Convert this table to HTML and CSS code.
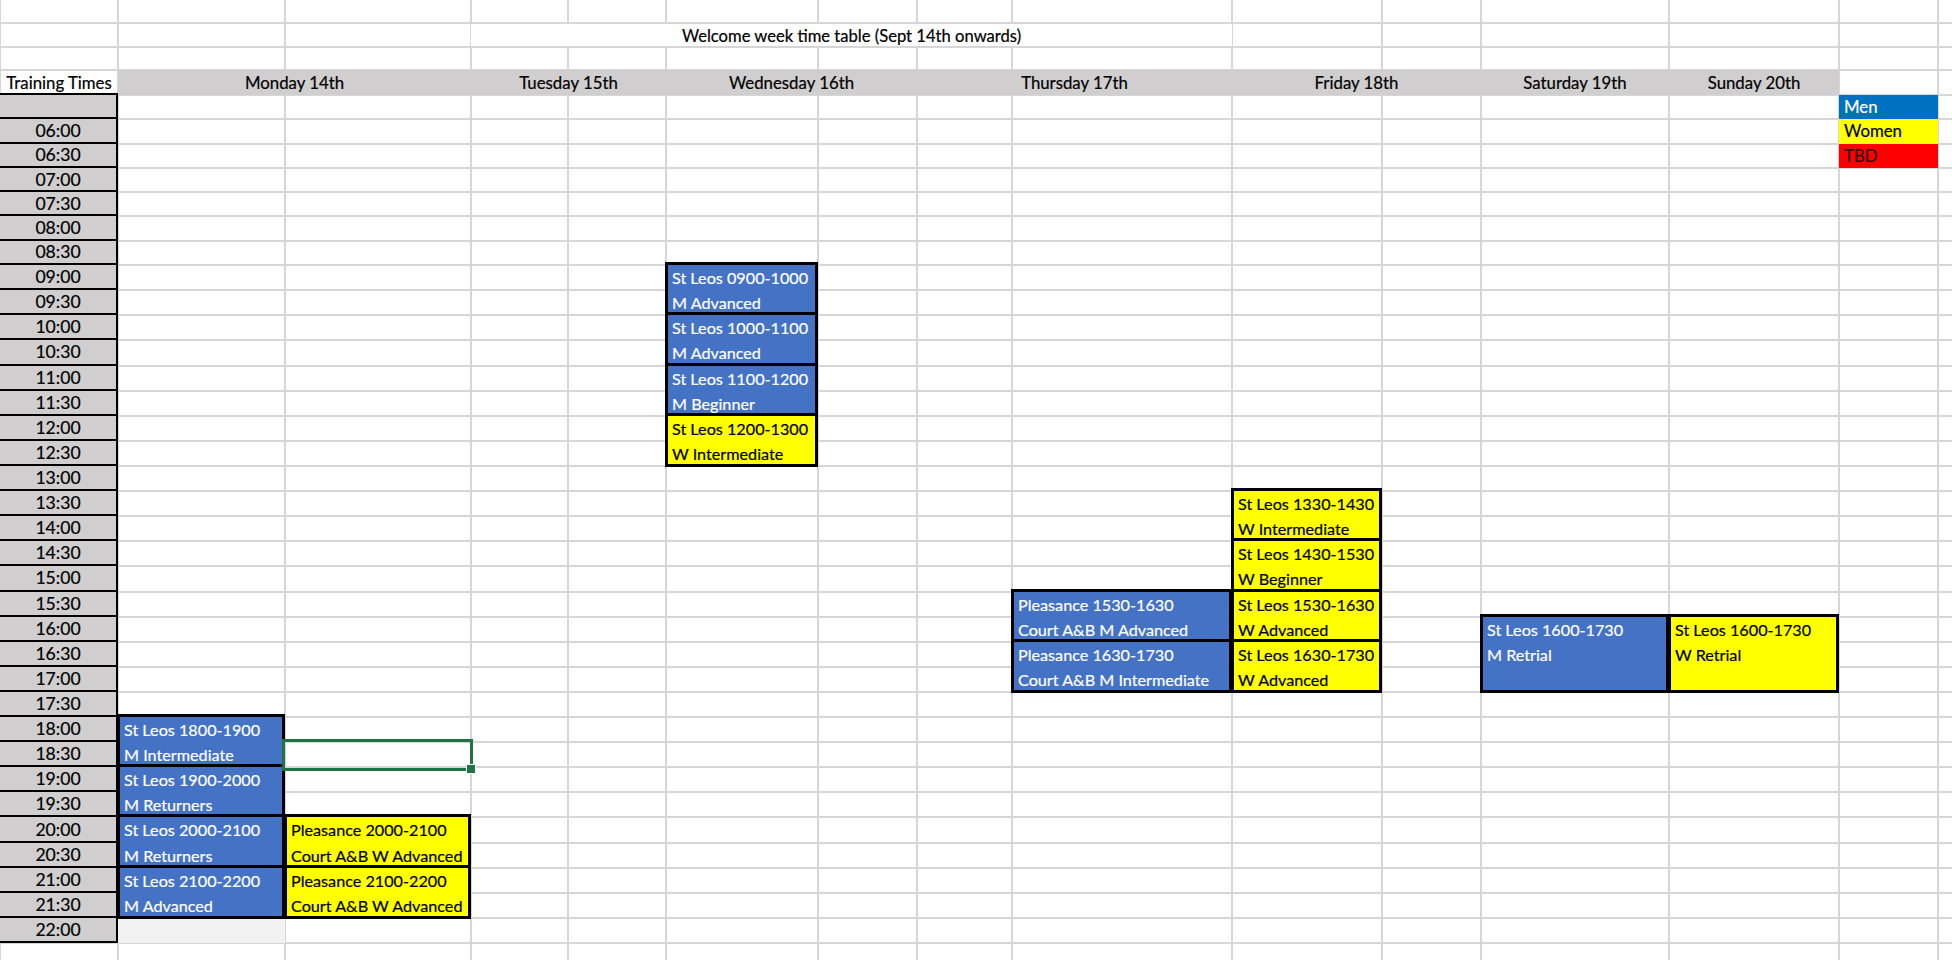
FILE: index.html
```html
<!DOCTYPE html>
<html lang="en">
<head>
<meta charset="utf-8">
<title>Welcome week time table</title>
<link rel="stylesheet" href="styles.css">
</head>
<body>
<div class="sheet">
  <div class="vgrid">
    <div></div><div></div><div></div><div></div><div></div>
    <div></div><div></div><div></div><div></div><div></div>
    <div></div><div></div><div></div><div></div><div></div>
  </div>
  <div class="hgrid">
    <div></div><div></div><div></div><div></div><div></div>
    <div></div><div></div><div></div><div></div><div></div>
    <div></div><div></div><div></div><div></div><div></div>
    <div></div><div></div><div></div><div></div><div></div>
    <div></div><div></div><div></div><div></div><div></div>
    <div></div><div></div><div></div><div></div><div></div>
    <div></div><div></div><div></div><div></div><div></div>
    <div></div><div></div><div></div><div></div>
  </div>

  <div class="title">Welcome week time table (Sept 14th onwards)</div>

  <div class="corner">Training Times</div>
  <div class="day mon">Monday 14th</div>
  <div class="day tue">Tuesday 15th</div>
  <div class="day wed">Wednesday 16th</div>
  <div class="day thu">Thursday 17th</div>
  <div class="day fri">Friday 18th</div>
  <div class="day sat">Saturday 19th</div>
  <div class="day sun">Sunday 20th</div>

  <div class="times">
    <div class="t"></div>
    <div class="t">06:00</div><div class="t">06:30</div>
    <div class="t">07:00</div><div class="t">07:30</div>
    <div class="t">08:00</div><div class="t">08:30</div>
    <div class="t">09:00</div><div class="t">09:30</div>
    <div class="t">10:00</div><div class="t">10:30</div>
    <div class="t">11:00</div><div class="t">11:30</div>
    <div class="t">12:00</div><div class="t">12:30</div>
    <div class="t">13:00</div><div class="t">13:30</div>
    <div class="t">14:00</div><div class="t">14:30</div>
    <div class="t">15:00</div><div class="t">15:30</div>
    <div class="t">16:00</div><div class="t">16:30</div>
    <div class="t">17:00</div><div class="t">17:30</div>
    <div class="t">18:00</div><div class="t">18:30</div>
    <div class="t">19:00</div><div class="t">19:30</div>
    <div class="t">20:00</div><div class="t">20:30</div>
    <div class="t">21:00</div><div class="t">21:30</div>
    <div class="t">22:00</div>
  </div>

  <div class="legend">
    <div class="lg men">Men</div>
    <div class="lg women">Women</div>
    <div class="lg tbd">TBD</div>
  </div>

  <!-- Wednesday -->
  <div class="ev blue cF rs12 sp2">St Leos 0900-1000<br>M Advanced</div>
  <div class="ev blue cF rs14 sp2">St Leos 1000-1100<br>M Advanced</div>
  <div class="ev blue cF rs16 sp2">St Leos 1100-1200<br>M Beginner</div>
  <div class="ev yellow cF rs18 sp2">St Leos 1200-1300<br>W Intermediate</div>

  <!-- Thursday -->
  <div class="ev blue cI rs25 sp2">Pleasance 1530-1630<br>Court A&amp;B M Advanced</div>
  <div class="ev blue cI rs27 sp2">Pleasance 1630-1730<br>Court A&amp;B M Intermediate</div>

  <!-- Friday -->
  <div class="ev yellow cJ rs21 sp2">St Leos 1330-1430<br>W Intermediate</div>
  <div class="ev yellow cJ rs23 sp2">St Leos 1430-1530<br>W Beginner</div>
  <div class="ev yellow cJ rs25 sp2">St Leos 1530-1630<br>W Advanced</div>
  <div class="ev yellow cJ rs27 sp2">St Leos 1630-1730<br>W Advanced</div>

  <!-- Saturday / Sunday -->
  <div class="ev blue cL rs26 sp3">St Leos 1600-1730<br>M Retrial</div>
  <div class="ev yellow cM rs26 sp3">St Leos 1600-1730<br>W Retrial</div>

  <!-- Monday -->
  <div class="ev blue cB rs30 sp2">St Leos 1800-1900<br>M Intermediate</div>
  <div class="ev blue cB rs32 sp2">St Leos 1900-2000<br>M Returners</div>
  <div class="ev blue cB rs34 sp2">St Leos 2000-2100<br>M Returners</div>
  <div class="ev blue cB rs36 sp2">St Leos 2100-2200<br>M Advanced</div>
  <div class="ev yellow cC rs34 sp2">Pleasance 2000-2100<br>Court A&amp;B W Advanced</div>
  <div class="ev yellow cC rs36 sp2">Pleasance 2100-2200<br>Court A&amp;B W Advanced</div>

  <div class="shade cB rs38"></div>

  <div class="selection cC rs31"></div>
</div>
</body>
</html>
```

FILE: styles.css
```css
:root {
  --cols: 118px 167px 186px 97px 98px 152px 99px 95px 220px 150px 99px 188px 170px 99px 14px;
  --body-rows: repeat(7, 24.3px) repeat(27, 25.11px);
  --rows: 23px 24px 23px 25px var(--body-rows) 25px;
  --grid-line: #d6d6d6;
  --head-grey: #d0cece;
}

html, body {
  margin: 0;
  padding: 0;
  background: #ffffff;
  overflow: hidden;
}

body {
  font-family: Lato, "Liberation Sans", sans-serif;
  font-size: 16.8px;
  color: #000000;
  -webkit-text-stroke: 0.2px currentColor;
}

.sheet {
  display: grid;
  grid-template-columns: var(--cols);
  grid-template-rows: var(--rows);
  width: 1952px;
  height: 960px;
  overflow: hidden;
}

/* gridlines */
.vgrid {
  grid-row: 1 / -1;
  grid-column: 1 / -1;
  display: grid;
  grid-template-columns: var(--cols);
  z-index: 0;
}
.vgrid > div {
  border-left: 2px solid var(--grid-line);
  margin-left: -1px;
}

.hgrid {
  grid-row: 1 / -1;
  grid-column: 1 / -1;
  display: grid;
  grid-template-rows: var(--rows);
  z-index: 2;
}
.hgrid > div {
  border-top: 2px solid var(--grid-line);
  margin-top: -1px;
}
.hgrid > div:first-child {
  border-top: 0;
}

/* title */
.title {
  grid-row: 2;
  grid-column: 4 / 10;
  background: #ffffff;
  z-index: 1;
  text-align: center;
  font-size: 16.6px;
  line-height: 24px;
  padding-top: 1px;
  white-space: nowrap;
}

/* header row */
.corner {
  grid-row: 4;
  grid-column: 1;
  z-index: 3;
  text-align: center;
  line-height: 25px;
  white-space: nowrap;
}
.day {
  grid-row: 4;
  background: var(--head-grey);
  z-index: 3;
  text-align: center;
  line-height: 25px;
  white-space: nowrap;
}
.mon { grid-column: 2 / 4; }
.tue { grid-column: 4 / 6; }
.wed { grid-column: 6 / 8; }
.thu { grid-column: 8 / 10; }
.fri { grid-column: 10 / 12; }
.sat { grid-column: 12 / 13; }
.sun { grid-column: 13 / 14; }

/* time column */
.times {
  grid-row: 5 / 39;
  grid-column: 1;
  display: grid;
  grid-template-rows: var(--body-rows);
  margin-top: -2px;
  border-top: 2px solid #000000;
  z-index: 3;
}
.t {
  background: var(--head-grey);
  border-bottom: 2px solid #000000;
  border-right: 2px solid #000000;
  display: flex;
  align-items: center;
  justify-content: center;
  font-size: 17.6px;
}

/* legend */
.legend {
  grid-row: 5 / 8;
  grid-column: 14;
  display: grid;
  grid-template-rows: repeat(3, 24.3px);
  z-index: 3;
}
.lg {
  padding-left: 5px;
  line-height: 24.3px;
}
.men { background: #0070c0; color: #ffffff; }
.women { background: #ffff00; color: #000000; }
.tbd { background: #ff0000; color: #1a0000; }

/* placement helpers */
.cB { grid-column: 2; }
.cC { grid-column: 3; }
.cF { grid-column: 6; }
.cI { grid-column: 9; }
.cJ { grid-column: 10; }
.cL { grid-column: 12; }
.cM { grid-column: 13; }

.rs12 { grid-row-start: 12; }
.rs14 { grid-row-start: 14; }
.rs16 { grid-row-start: 16; }
.rs18 { grid-row-start: 18; }
.rs21 { grid-row-start: 21; }
.rs23 { grid-row-start: 23; }
.rs25 { grid-row-start: 25; }
.rs26 { grid-row-start: 26; }
.rs27 { grid-row-start: 27; }
.rs30 { grid-row-start: 30; }
.rs31 { grid-row-start: 31; }
.rs32 { grid-row-start: 32; }
.rs34 { grid-row-start: 34; }
.rs36 { grid-row-start: 36; }
.rs38 { grid-row-start: 38; }

.sp2 { grid-row-end: span 2; }
.sp3 { grid-row-end: span 3; }

/* event blocks */
.ev {
  z-index: 4;
  border: 3px solid #000000;
  margin: -3px 0 -1px -1px;
  padding-left: 4px;
  font-size: 16.2px;
  line-height: 25.11px;
  white-space: nowrap;
  overflow: hidden;
}
.blue { background: #4472c4; color: #ffffff; }
.yellow { background: #ffff00; color: #000000; }

.shade {
  background: #f2f2f2;
  z-index: 3;
}

/* active cell */
.selection {
  position: relative;
  z-index: 6;
  border: 3px solid #217346;
  margin: -3px -2px -4px -3px;
}
.selection::after {
  content: "";
  position: absolute;
  right: -6px;
  bottom: -6px;
  width: 8px;
  height: 8px;
  background: #217346;
  border: 1px solid #ffffff;
}
```
